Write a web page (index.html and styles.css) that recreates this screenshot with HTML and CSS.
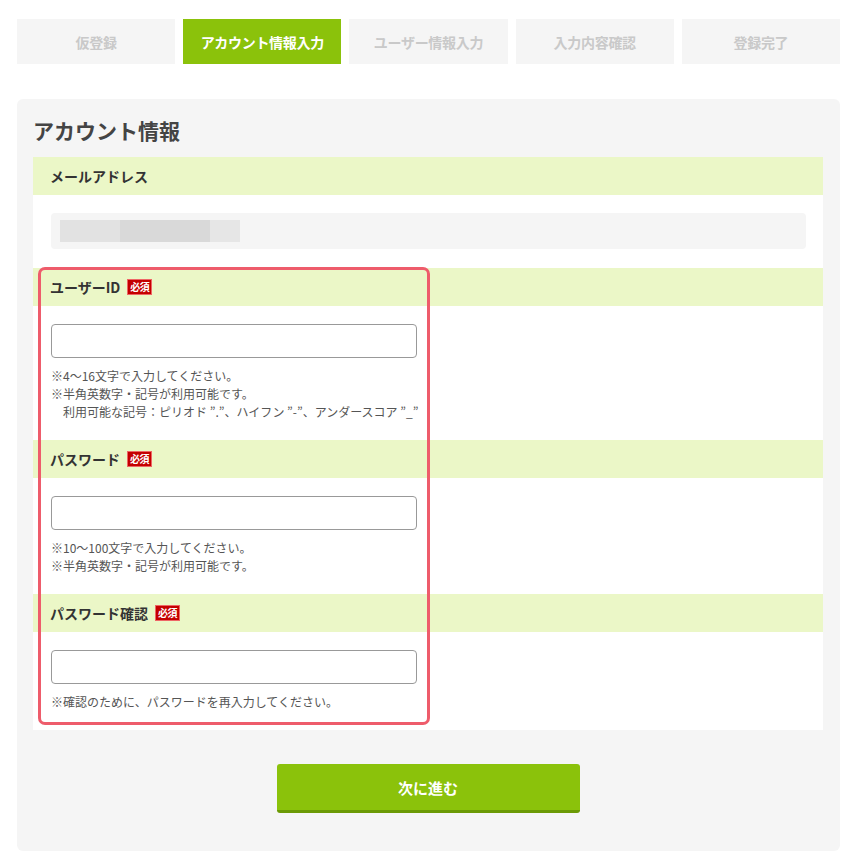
FILE: index.html
```html
<!DOCTYPE html>
<html lang="ja">
<head>
  <meta charset="UTF-8">
  <title>アカウント情報入力</title>
  <link rel="stylesheet" href="styles.css">
</head>
<body>
  <ol class="steps">
    <li>仮登録</li>
    <li class="current">アカウント情報入力</li>
    <li>ユーザー情報入力</li>
    <li>入力内容確認</li>
    <li>登録完了</li>
  </ol>

  <div class="panel">
    <h2>アカウント情報</h2>
    <div class="form">
      <div class="field">
        <div class="field-head">メールアドレス</div>
        <div class="field-body">
          <div class="readonly"><span class="masked"></span></div>
        </div>
      </div>

      <div class="group">
        <div class="field">
          <div class="field-head">ユーザーID <span class="req">必須</span></div>
          <div class="field-body">
            <input type="text" class="text">
            <div class="notes">
              <p>※4～16文字で入力してください。</p>
              <p>※半角英数字・記号が利用可能です。</p>
              <p class="indent">利用可能な記号：ピリオド ”.”、ハイフン ”-”、アンダースコア ”_”</p>
            </div>
          </div>
        </div>

        <div class="field">
          <div class="field-head">パスワード <span class="req">必須</span></div>
          <div class="field-body">
            <input type="password" class="text">
            <div class="notes">
              <p>※10～100文字で入力してください。</p>
              <p>※半角英数字・記号が利用可能です。</p>
            </div>
          </div>
        </div>

        <div class="field">
          <div class="field-head">パスワード確認 <span class="req">必須</span></div>
          <div class="field-body">
            <input type="password" class="text">
            <div class="notes">
              <p>※確認のために、パスワードを再入力してください。</p>
            </div>
          </div>
        </div>

        <div class="highlight"></div>
      </div>
    </div>

    <div class="actions">
      <button type="button" class="next">次に進む</button>
    </div>
  </div>
</body>
</html>
```

FILE: styles.css
```css
body {
  margin: 0;
  background: #fff;
  font-family: "Noto Sans CJK JP", "Noto Sans", sans-serif;
  color: #333;
}
.steps {
  list-style: none;
  margin: 0;
  padding: 19px 4px 0 17px;
  display: grid;
  grid-template-columns: repeat(5, 1fr);
  gap: 8px;
}
.steps li {
  height: 45px;
  display: flex;
  align-items: center;
  justify-content: center;
  background: #f5f5f5;
  color: #c9c9c9;
  font-size: 14px;
  font-weight: bold;
  letter-spacing: -0.3px;
}
.steps li.current {
  background: #8bc20b;
  color: #fff;
}
.panel {
  margin: 35px 4px 0 17px;
  background: #f5f5f5;
  border-radius: 6px;
  padding: 15px 17px 38px 16px;
}
.panel h2 {
  margin: 0 0 11px;
  font-size: 21px;
  line-height: 32px;
  font-weight: bold;
  color: #444;
}
.form {
  background: #fff;
}
.group {
  position: relative;
}
.field-head {
  height: 38px;
  display: flex;
  align-items: center;
  gap: 7px;
  padding-left: 17px;
  background: #ebf7c7;
  font-size: 14px;
  font-weight: bold;
  color: #333;
}
.req {
  display: inline-block;
  background: #c40000;
  color: #fff;
  font-size: 10px;
  line-height: 14px;
  padding: 0 2px;
  border: 1px solid #e66;
  letter-spacing: -0.5px;
}
.field-body {
  padding: 18px 17px 19px 18px;
}
.readonly {
  height: 36px;
  background: #f5f5f5;
  border-radius: 4px;
  display: flex;
  align-items: center;
  padding-left: 9px;
}
.masked {
  width: 180px;
  height: 22px;
  background: linear-gradient(to right, #e2e2e2 0 60px, #d9d9d9 60px 150px, #e6e6e6 150px);
}
.text {
  display: block;
  box-sizing: border-box;
  width: 366px;
  height: 34px;
  border: 1px solid #999;
  border-radius: 4px;
  background: #fff;
  margin: 0;
}
.notes {
  margin-top: 9px;
  font-size: 12px;
  line-height: 18px;
  color: #555;
}
.notes p {
  margin: 0;
}
.notes .indent {
  padding-left: 1em;
}
.highlight {
  position: absolute;
  top: -1px;
  left: 5px;
  width: 392px;
  bottom: 5px;
  box-sizing: border-box;
  border: 3px solid #ee5c6b;
  border-radius: 7px;
  pointer-events: none;
}
.actions {
  display: flex;
  justify-content: center;
  padding-top: 34px;
}
.next {
  width: 303px;
  height: 49px;
  border: none;
  border-bottom: 3px solid #6b9a05;
  border-radius: 3px;
  background: #8bc20b;
  color: #fff;
  font-family: inherit;
  font-size: 15px;
  font-weight: bold;
}
```
